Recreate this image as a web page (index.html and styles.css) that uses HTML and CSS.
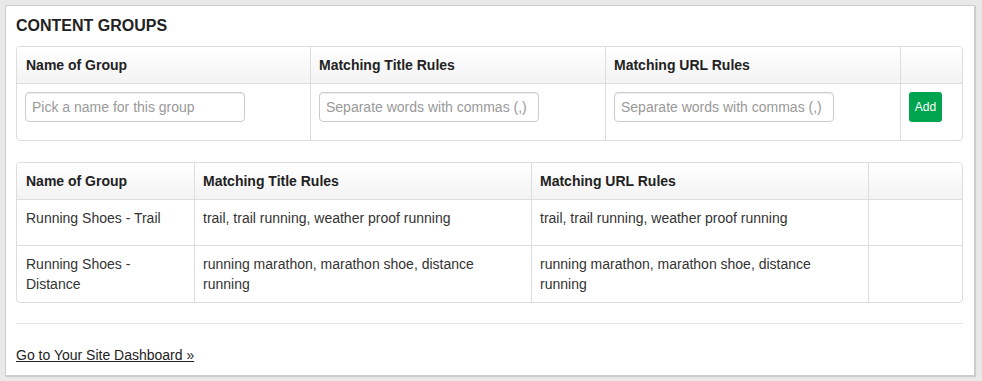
FILE: index.html
```html
<!DOCTYPE html>
<html>
<head>
<meta charset="utf-8">
<title>Content Groups</title>
<link rel="stylesheet" href="styles.css">
</head>
<body>
<div class="panel">
  <h2 class="title">CONTENT GROUPS</h2>

  <div class="grid grid-new">
    <div class="cell head">Name of Group</div>
    <div class="cell head">Matching Title Rules</div>
    <div class="cell head">Matching URL Rules</div>
    <div class="cell head"></div>

    <div class="cell body form-cell"><input class="field" type="text" placeholder="Pick a name for this group"></div>
    <div class="cell body form-cell"><input class="field" type="text" placeholder="Separate words with commas (,)"></div>
    <div class="cell body form-cell"><input class="field" type="text" placeholder="Separate words with commas (,)"></div>
    <div class="cell body form-cell"><button class="btn-add" type="button">Add</button></div>
  </div>

  <div class="grid grid-list">
    <div class="cell head">Name of Group</div>
    <div class="cell head">Matching Title Rules</div>
    <div class="cell head">Matching URL Rules</div>
    <div class="cell head"></div>

    <div class="cell body row">Running Shoes - Trail</div>
    <div class="cell body row">trail, trail running, weather proof running</div>
    <div class="cell body row">trail, trail running, weather proof running</div>
    <div class="cell body row"></div>

    <div class="cell body row">Running Shoes - Distance</div>
    <div class="cell body row">running marathon, marathon shoe, distance running</div>
    <div class="cell body row">running marathon, marathon shoe, distance running</div>
    <div class="cell body row"></div>
  </div>

  <hr class="divider">

  <a class="dash-link" href="#">Go to Your Site Dashboard &raquo;</a>
</div>
</body>
</html>
```

FILE: styles.css
```css
* {
  box-sizing: border-box;
}

html, body {
  margin: 0;
  padding: 0;
}

body {
  background: #e9e9e9;
  font-family: "Liberation Sans", Arial, Helvetica, sans-serif;
  font-size: 14px;
  line-height: 20px;
  color: #333;
  padding: 5px;
}

.panel {
  width: 970px;
  background: #fff;
  border: 1px solid #cdcdcd;
  box-shadow: 1px 1px 1px rgba(0, 0, 0, 0.12);
  padding: 10px 11px 10px 10px;
}

.title {
  margin: 0 0 10px;
  font-size: 16px;
  line-height: 20px;
  font-weight: bold;
  color: #222;
}

.grid {
  display: grid;
  border: 1px solid #ddd;
  border-radius: 4px;
  overflow: hidden;
}

.grid-new {
  grid-template-columns: 293px 295px 295px 62px;
  margin-bottom: 21px;
}

.grid-list {
  grid-template-columns: 177px 337px 337px 94px;
  margin-bottom: 20px;
}

.cell {
  padding: 8px 8px;
  border-left: 1px solid #ddd;
}

.cell:nth-child(4n+1) {
  border-left: none;
  padding-left: 9px;
}

.head {
  font-weight: bold;
  color: #222;
  background: linear-gradient(#ffffff, #f3f3f3);
}

.body {
  border-top: 1px solid #ddd;
}

.form-cell {
  padding-bottom: 18px;
}

.cell.form-cell:nth-child(4n+1) {
  padding-left: 8px;
}

.row {
  min-height: 46px;
}

.field {
  display: block;
  width: 220px;
  height: 30px;
  padding: 4px 6px;
  border: 1px solid #ccc;
  border-radius: 4px;
  box-shadow: inset 0 1px 1px rgba(0, 0, 0, 0.075);
  font-family: "Liberation Sans", Arial, Helvetica, sans-serif;
  font-size: 14px;
  line-height: 20px;
  color: #555;
  background: #fff;
}

.field::placeholder {
  color: #999;
}

.btn-add {
  display: block;
  width: 33px;
  height: 30px;
  padding: 0;
  border: none;
  border-radius: 3px;
  background: #00a34e;
  color: #fff;
  font-family: "Liberation Sans", Arial, Helvetica, sans-serif;
  font-size: 12px;
  line-height: 30px;
  text-align: center;
}

.divider {
  margin: 0 0 21px;
  border: none;
  border-top: 1px solid #e5e5e5;
  height: 0;
}

.dash-link {
  display: inline-block;
  color: #222;
  text-decoration: underline;
  line-height: 20px;
}
```
